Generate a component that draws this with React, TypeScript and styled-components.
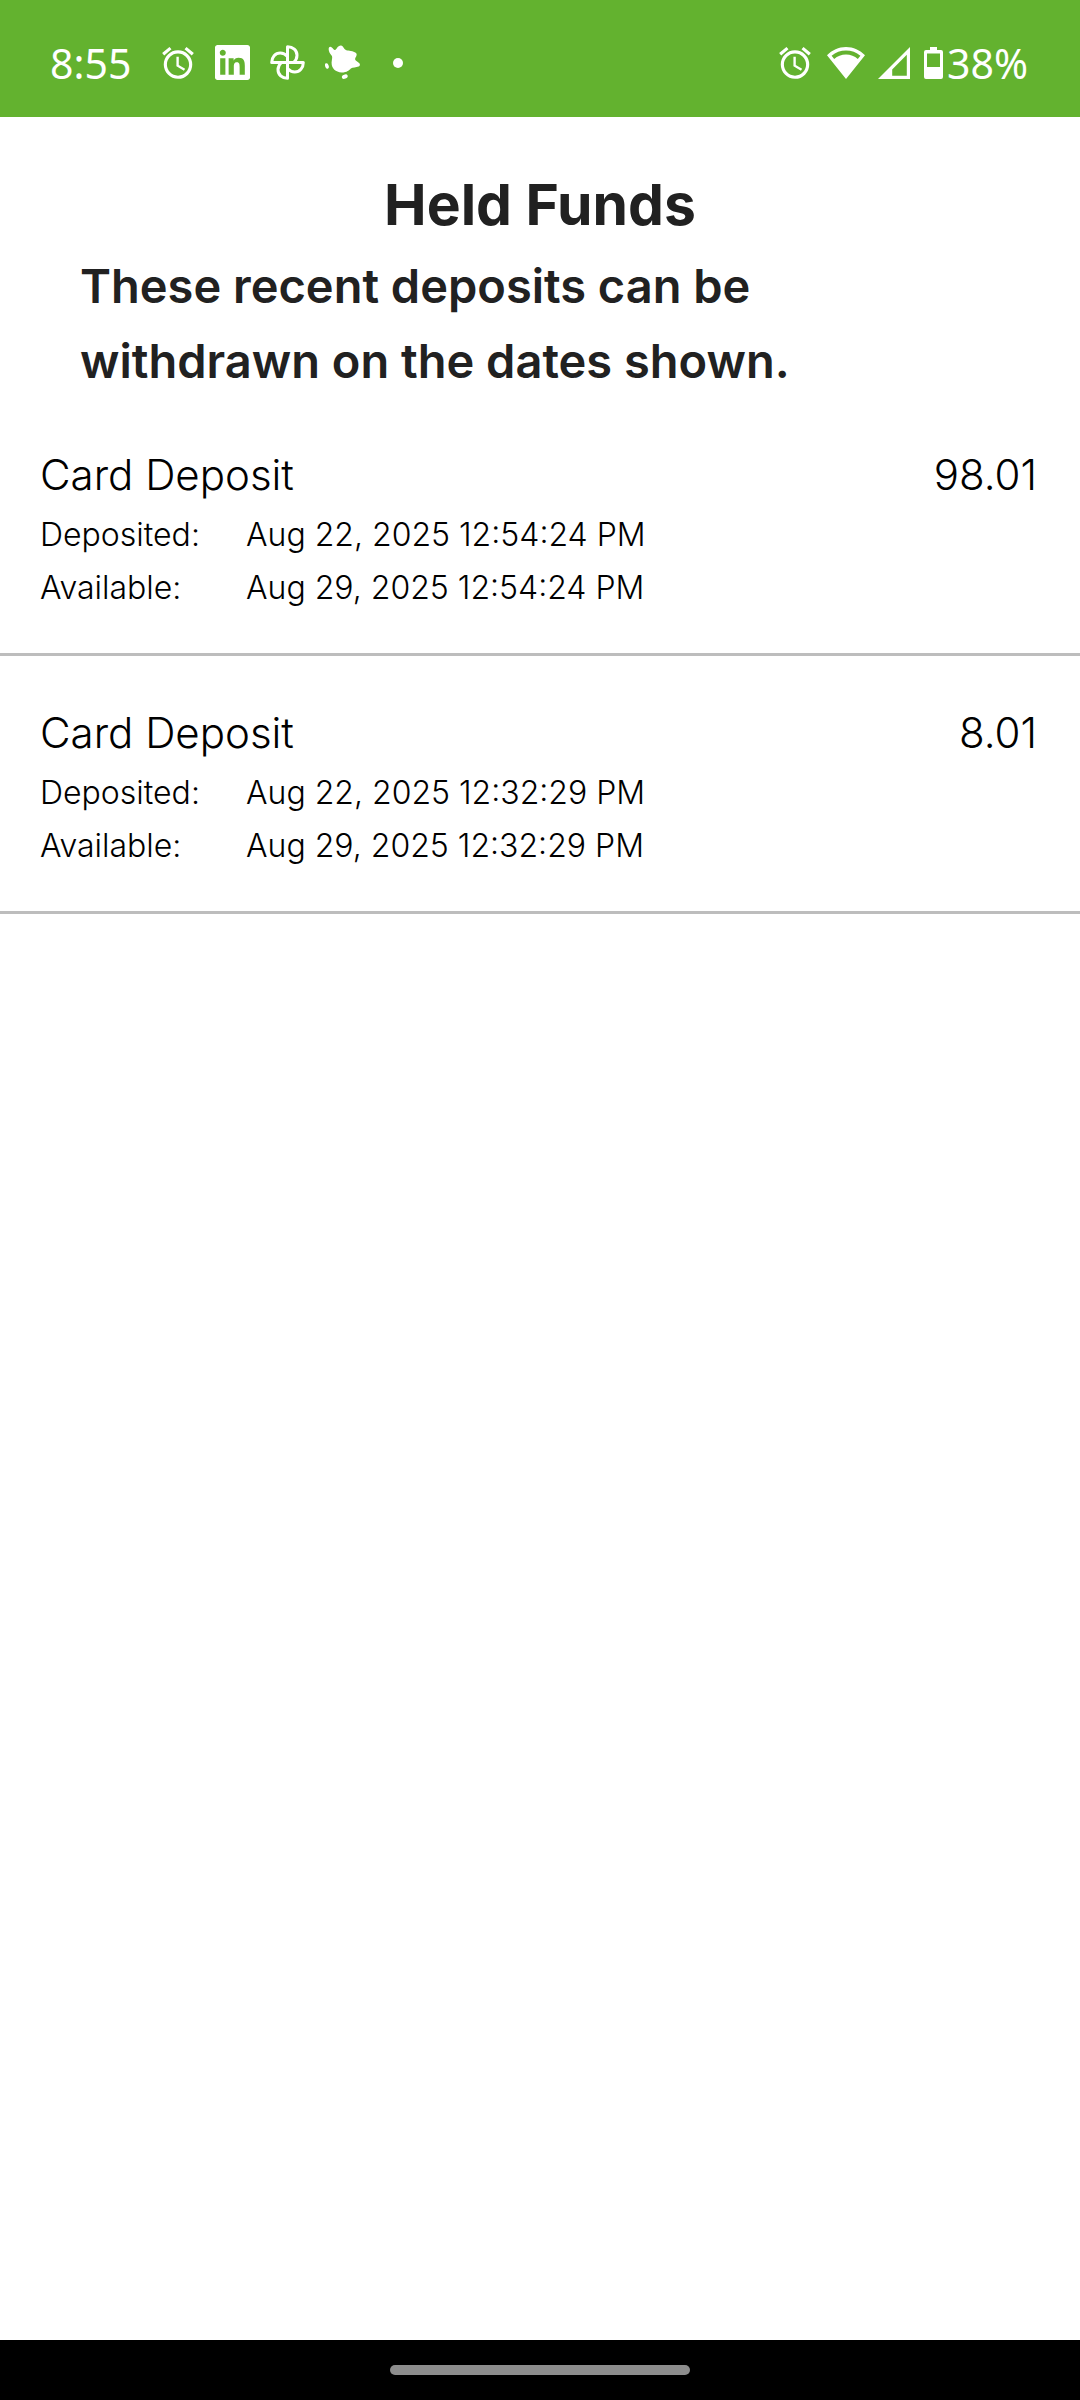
import React from "react";
import styled, { createGlobalStyle } from "styled-components";
import { MdAlarm } from "react-icons/md";

const GlobalStyle = createGlobalStyle`
  *, *::before, *::after { box-sizing: border-box; }
  body {
    margin: 0;
    background: #fff;
    color: #000;
    font-family: Inter, "Liberation Sans", sans-serif;
  }
`;

const Screen = styled.div`
  display: flex;
  flex-direction: column;
  min-height: 100vh;
`;

const StatusBar = styled.header`
  display: flex;
  justify-content: space-between;
  align-items: center;
  height: 117px;
  padding: 8px 52px 0 50px;
  background: #63b22f;
  color: #fff;
  font-family: "Noto Sans", "Open Sans", sans-serif;
  font-size: 41px;
  line-height: 56px;
`;

const StatusGroup = styled.div<{ $gap: number }>`
  display: flex;
  align-items: center;
  gap: ${({ $gap }) => $gap}px;
`;

const IconCell = styled.span<{ $width: number }>`
  display: flex;
  align-items: center;
  justify-content: center;
  width: ${({ $width }) => $width}px;
  svg { display: block; flex: none; }
`;

const Main = styled.main`
  flex: 1;
`;

const Intro = styled.section`
  padding: 50px 80px 0;
  color: #212121;
`;

const Title = styled.h1`
  margin: 0;
  font-size: 57px;
  font-weight: 700;
  line-height: 76px;
  text-align: center;
`;

const Subtitle = styled.p`
  margin: 5px 0 0;
  font-size: 47px;
  font-weight: 600;
  line-height: 75px;
`;

const DepositList = styled.ul`
  margin: 0;
  padding: 0;
  list-style: none;
`;

const DepositItem = styled.li`
  padding: 44px 43px 39px 40px;
  border-bottom: 3px solid #bdbdbd;
  font-weight: 300;
`;

const DepositHeader = styled.div`
  display: flex;
  justify-content: space-between;
  font-size: 42px;
  line-height: 66px;
`;

const DepositName = styled.h2`
  margin: 0;
  font: inherit;
`;

const Dates = styled.dl`
  display: grid;
  grid-template-columns: 206px 1fr;
  margin: 0;
  font-size: 32px;
  line-height: 53px;
`;

const Term = styled.dt``;

const Value = styled.dd`
  margin: 0;
`;

const NavBar = styled.footer`
  display: flex;
  align-items: center;
  justify-content: center;
  height: 60px;
  background: #000;
`;

const HomePill = styled.span`
  width: 300px;
  height: 10px;
  border-radius: 5px;
  background: #8d8d8d;
`;

const LinkedInIcon = () => (
  <svg width="35" height="35" viewBox="0 0 24 24" fill="currentColor" aria-hidden="true">
    <path d="M20.447 20.452h-3.554v-5.569c0-1.328-.027-3.037-1.852-3.037-1.853 0-2.136 1.445-2.136 2.939v5.667H9.351V9h3.414v1.561h.046c.477-.9 1.637-1.85 3.37-1.85 3.601 0 4.267 2.37 4.267 5.455v6.286zM5.337 7.433c-1.144 0-2.063-.926-2.063-2.065 0-1.138.92-2.063 2.063-2.063 1.14 0 2.064.925 2.064 2.063 0 1.139-.925 2.065-2.064 2.065zm1.782 13.019H3.555V9h3.564v11.452zM22.225 0H1.771C.792 0 0 .774 0 1.729v20.542C0 23.227.792 24 1.771 24h20.451C23.2 24 24 23.227 24 22.271V1.729C24 .774 23.2 0 22.222 0h.003z" />
  </svg>
);

const blade = "M17.5 17.5V1.7C23 1.7 27 5.3 27 10.2C27 13 25.8 15.5 23.6 17.5";

const PinwheelIcon = () => (
  <svg
    width="35"
    height="35"
    viewBox="0 0 35 35"
    fill="none"
    stroke="currentColor"
    strokeWidth="3"
    strokeLinejoin="round"
    aria-hidden="true"
  >
    {[0, 90, 180, 270].map((angle) => (
      <path key={angle} d={blade} transform={`rotate(${angle} 17.5 17.5)`} />
    ))}
  </svg>
);

const SplashIcon = () => (
  <svg width="35" height="35" viewBox="0 0 35 35" fill="currentColor" aria-hidden="true">
    <path d="M4 2.6C5 .8 7 2.2 8.5 4.2C9.6 5.6 10.6 5 11.8 3.2C13.6.6 16.4-.4 18 1.8C19.2 3.6 19.6 5 22 5.4C25 5.6 30 6.4 31.4 8.4C32.2 10 31 11.6 30.2 13.4C29.6 15 31.4 16 33.4 17.6C35.4 18.8 35.4 20.8 33.6 21.6C31 22.8 28 22.2 25.8 23.4C24.4 25 22 27.4 16.6 27.4C10.6 27.2 6.6 23.4 6.6 18C6.4 15.4 8 13 6.6 10.6C4.4 8 3 5 4 2.6Z" />
    <ellipse cx="1.9" cy="21" rx="1.8" ry="2.8" transform="rotate(-18 1.9 21)" />
    <ellipse cx="19.8" cy="31.6" rx="3" ry="2.1" transform="rotate(-20 19.8 31.6)" />
  </svg>
);

const DotIcon = () => (
  <svg width="10" height="10" viewBox="0 0 10 10" fill="currentColor" aria-hidden="true">
    <circle cx="5" cy="5" r="5" />
  </svg>
);

const WifiIcon = () => (
  <svg width="38" height="32" viewBox="0 0 38 32" fill="currentColor" aria-hidden="true">
    <path
      fillRule="evenodd"
      d="M19 32L0 8.2C5 3.2 11.6 0 19 0S33 3.2 38 8.2ZM4.6 8.7L7.2 12C10.4 9.2 14.4 7.6 19 7.6S27.6 9.2 30.8 12L33.4 8.7C29.4 5.3 24.4 3.4 19 3.4S8.6 5.3 4.6 8.7Z"
    />
  </svg>
);

const SignalIcon = () => (
  <svg width="32" height="32" viewBox="0 0 32 32" fill="currentColor" aria-hidden="true">
    <path fillRule="evenodd" d="M32 0V32H0ZM28.8 7.8L14.2 22.4V28.8H28.8Z" />
  </svg>
);

const BatteryIcon = () => (
  <svg width="19" height="32" viewBox="0 0 19 32" fill="currentColor" aria-hidden="true">
    <path
      fillRule="evenodd"
      d="M6 0H13V3H17Q19 3 19 5V30Q19 32 17 32H2Q0 32 0 30V5Q0 3 2 3H6ZM3 6.6V20H16V6.6Z"
    />
  </svg>
);

type Deposit = {
  name: string;
  amount: string;
  deposited: string;
  available: string;
};

const deposits: Deposit[] = [
  {
    name: "Card Deposit",
    amount: "98.01",
    deposited: "Aug 22, 2025 12:54:24 PM",
    available: "Aug 29, 2025 12:54:24 PM",
  },
  {
    name: "Card Deposit",
    amount: "8.01",
    deposited: "Aug 22, 2025 12:32:29 PM",
    available: "Aug 29, 2025 12:32:29 PM",
  },
];

export default function App() {
  return (
    <Screen>
      <GlobalStyle />
      <StatusBar>
        <StatusGroup $gap={19}>
          <span>8:55</span>
          <StatusGroup $gap={0}>
            <IconCell $width={55}><MdAlarm size={38} /></IconCell>
            <IconCell $width={55}><LinkedInIcon /></IconCell>
            <IconCell $width={55}><PinwheelIcon /></IconCell>
            <IconCell $width={55}><SplashIcon /></IconCell>
            <IconCell $width={55}><DotIcon /></IconCell>
          </StatusGroup>
        </StatusGroup>
        <StatusGroup $gap={4}>
          <StatusGroup $gap={12}>
            <IconCell $width={40}><MdAlarm size={38} /></IconCell>
            <IconCell $width={38}><WifiIcon /></IconCell>
            <IconCell $width={34}><SignalIcon /></IconCell>
            <IconCell $width={20}><BatteryIcon /></IconCell>
          </StatusGroup>
          <span>38%</span>
        </StatusGroup>
      </StatusBar>
      <Main>
        <Intro>
          <Title>Held Funds</Title>
          <Subtitle>These recent deposits can be withdrawn on the dates shown.</Subtitle>
        </Intro>
        <DepositList>
          {deposits.map((deposit) => (
            <DepositItem key={deposit.deposited}>
              <DepositHeader>
                <DepositName>{deposit.name}</DepositName>
                <span>{deposit.amount}</span>
              </DepositHeader>
              <Dates>
                <Term>Deposited:</Term>
                <Value>{deposit.deposited}</Value>
                <Term>Available:</Term>
                <Value>{deposit.available}</Value>
              </Dates>
            </DepositItem>
          ))}
        </DepositList>
      </Main>
      <NavBar>
        <HomePill />
      </NavBar>
    </Screen>
  );
}
